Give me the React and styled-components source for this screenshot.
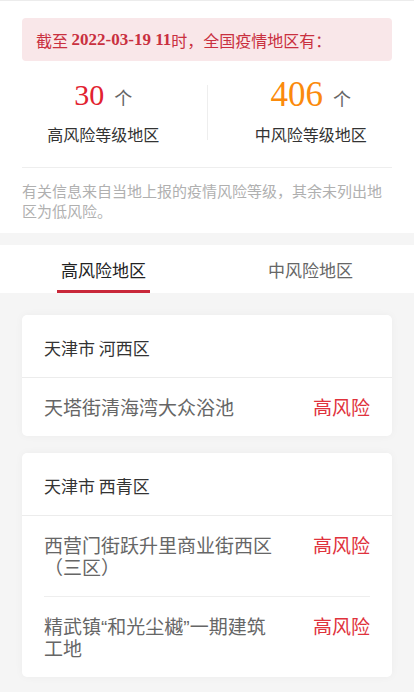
import React from "react";
import styled, {createGlobalStyle} from "styled-components";

const GlobalStyle = createGlobalStyle`
  html, body {
    margin: 0;
    padding: 0;
    background: #f5f5f5;
    font-family: "Noto Sans CJK SC", "Liberation Sans", sans-serif;
  }
`

const Page = styled.div`
  width: 414px;
  min-height: 692px;
  background: #f5f5f5;
  border-top: 1px solid #ececec;
`

const Summary = styled.section`
  background: #fff;
  padding: 17px 0 12px;
  margin-bottom: 12px;
`

const Notice = styled.div`
  margin: 0 22px;
  height: 43px;
  display: flex;
  align-items: center;
  padding: 0 14px;
  background: #f9e7e9;
  border-radius: 4px;
  color: #c9303f;
  font-size: 16px;
  b {
    font-family: "Liberation Serif", serif;
    font-weight: bold;
    font-size: 17px;
  }
`

const Stats = styled.div`
  display: flex;
  align-items: center;
  padding: 18px 0 22px;
`

const Divider = styled.div`
  width: 1px;
  height: 55px;
  background: #eeeeee;
`

const Stat = styled.div`
  flex: 1;
  display: flex;
  flex-direction: column;
  align-items: center;
`

const Count = styled.div`
  height: 32px;
  display: flex;
  align-items: baseline;
  gap: 10px;
  span {
    font-family: "Noto Sans CJK SC", sans-serif;
    font-size: 18px;
    color: #666;
  }
`

const Number = styled.em`
  font-style: normal;
  font-family: "Liberation Serif", serif;
  font-size: ${p => p.$big ? "35px" : "30px"};
  line-height: 32px;
  color: ${p => p.$color};
`

const Label = styled.div`
  margin-top: 12px;
  font-size: 16px;
  line-height: 22px;
  color: #333;
`

const Note = styled.p`
  margin: 0 22px;
  padding-top: 13px;
  border-top: 1px solid #eeeeee;
  font-size: 15px;
  line-height: 20px;
  color: #b0b0b0;
`

const Tabs = styled.nav`
  display: flex;
  background: #fff;
  height: 48px;
`

const Tab = styled.div`
  flex: 1;
  display: flex;
  justify-content: center;
  align-items: center;
  position: relative;
  font-size: 17px;
  color: ${p => p.$active ? "#222" : "#666"};
  &::after {
    content: "";
    display: ${p => p.$active ? "block" : "none"};
    position: absolute;
    bottom: 0;
    left: 57px;
    width: 93px;
    height: 3px;
    background: #c9283a;
  }
`

const List = styled.div`
  display: flex;
  flex-direction: column;
  gap: 17px;
  padding: 22px 22px 14px;
`

const Card = styled.div`
  background: #fff;
  border-radius: 5px;
  box-shadow: 0 0 8px rgba(0, 0, 0, 0.04);
`

const CardHead = styled.div`
  padding: 21px 22px 18px;
  font-size: 17px;
  line-height: 23px;
  color: #333;
  border-bottom: 1px solid #ececec;
`

const Row = styled.div`
  margin: 0 22px;
  padding: 20px 0 15px;
  display: flex;
  justify-content: space-between;
  align-items: flex-start;
  font-family: "Liberation Sans", "Noto Sans CJK SC", sans-serif;
  font-size: 19px;
  line-height: 22.5px;
  & + & {
    border-top: 1px solid #eeeeee;
  }
`

const Place = styled.div`
  width: 232px;
  color: #666;
`

const Risk = styled.div`
  color: #e0323c;
  white-space: nowrap;
`

const areas = [
    {city: "天津市 河西区", places: ["天塔街清海湾大众浴池"]},
    {city: "天津市 西青区", places: ["西营门街跃升里商业街西区（三区）", "精武镇“和光尘樾”一期建筑工地"]},
]

const App = () => {
    return (
        <Page>
            <GlobalStyle/>
            <Summary>
                <Notice>截至&nbsp;<b>2022-03-19 11</b>时，全国疫情地区有：</Notice>
                <Stats>
                    <Stat>
                        <Count><Number $color="#e2222f">30</Number><span>个</span></Count>
                        <Label>高风险等级地区</Label>
                    </Stat>
                    <Divider/>
                    <Stat>
                        <Count><Number $big $color="#fb8a0c">406</Number><span>个</span></Count>
                        <Label>中风险等级地区</Label>
                    </Stat>
                </Stats>
                <Note>有关信息来自当地上报的疫情风险等级，其余未列出地区为低风险。</Note>
            </Summary>
            <Tabs>
                <Tab $active>高风险地区</Tab>
                <Tab>中风险地区</Tab>
            </Tabs>
            <List>
                {areas.map(a => (
                    <Card key={a.city}>
                        <CardHead>{a.city}</CardHead>
                        {a.places.map(p => (
                            <Row key={p}>
                                <Place>{p}</Place>
                                <Risk>高风险</Risk>
                            </Row>
                        ))}
                    </Card>
                ))}
            </List>
        </Page>
    )
}

export default App;
